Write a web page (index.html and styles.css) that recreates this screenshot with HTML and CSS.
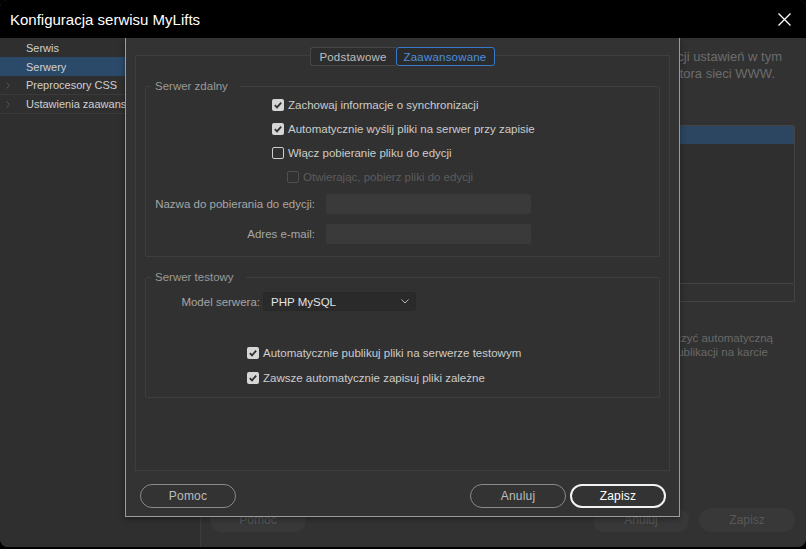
FILE: index.html
```html
<!DOCTYPE html>
<html lang="pl">
<head>
<meta charset="utf-8">
<title>Konfiguracja serwisu MyLifts</title>
<link rel="stylesheet" href="styles.css">
</head>
<body>
<div class="window">
  <header class="titlebar">
    <span class="title">Konfiguracja serwisu MyLifts</span>
    <svg class="close" width="13" height="13" viewBox="0 0 13 13"><path d="M0.5 0.5 L12.5 12.5 M12.5 0.5 L0.5 12.5" stroke="#fff" stroke-width="1.3" fill="none"/></svg>
  </header>
  <div class="content">
    <nav class="sidebar">
      <div class="nav-item"><span class="chev"></span>Serwis</div>
      <div class="nav-item selected"><span class="chev"></span>Serwery</div>
      <div class="nav-item sep"><span class="chev"><svg width="4" height="7" viewBox="0 0 4 7"><path d="M0.5 0.5 L3.5 3.5 L0.5 6.5" stroke="#555" fill="none"/></svg></span>Preprocesory CSS</div>
      <div class="nav-item sep"><span class="chev"><svg width="4" height="7" viewBox="0 0 4 7"><path d="M0.5 0.5 L3.5 3.5 L0.5 6.5" stroke="#555" fill="none"/></svg></span>Ustawienia zaawansowane</div>
    </nav>
    <main class="main">
      <div class="intro">
        <div>konfiguracji ustawień w tym</div>
        <div class="intro-second">administratora sieci WWW.</div>
      </div>
      <div class="site-table">
        <div class="site-table-head"></div>
      </div>
      <div class="table-tools"></div>
      <div class="note">
        <div>Aby wyłączyć automatyczną</div>
        <div class="note-second">w sekcji publikacji na karcie</div>
      </div>
      <div class="bg-buttons">
        <span class="bg-btn">Pomoc</span>
        <span class="bg-right">
          <span class="bg-btn">Anuluj</span>
          <span class="bg-btn">Zapisz</span>
        </span>
      </div>
    </main>
  </div>

  <div class="dialog">
    <div class="tabs">
      <span class="tab">Podstawowe</span>
      <span class="tab active">Zaawansowane</span>
    </div>
    <div class="panel">
      <fieldset class="group group-remote">
        <legend>Serwer zdalny</legend>
        <div class="checks checks-main">
          <label class="check-row"><span class="box checked"><svg width="12" height="12" viewBox="0 0 12 12"><path d="M2.8 6.2 L5 8.4 L9.2 3.6" stroke="#2e2e2e" stroke-width="1.7" fill="none"/></svg></span>Zachowaj informacje o synchronizacji</label>
          <label class="check-row"><span class="box checked"><svg width="12" height="12" viewBox="0 0 12 12"><path d="M2.8 6.2 L5 8.4 L9.2 3.6" stroke="#2e2e2e" stroke-width="1.7" fill="none"/></svg></span>Automatycznie wyślij pliki na serwer przy zapisie</label>
          <label class="check-row"><span class="box"></span>Włącz pobieranie pliku do edycji</label>
          <label class="check-row sub disabled"><span class="box"></span>Otwierając, pobierz pliki do edycji</label>
        </div>
        <div class="form-grid">
          <span class="field-label">Nazwa do pobierania do edycji:</span>
          <span class="input"></span>
          <span class="field-label">Adres e-mail:</span>
          <span class="input"></span>
        </div>
      </fieldset>
      <fieldset class="group group-test">
        <legend>Serwer testowy</legend>
        <div class="model-row">
          <span class="field-label">Model serwera:</span>
          <span class="select">PHP MySQL<svg width="8" height="5" viewBox="0 0 8 5"><path d="M0.5 0.5 L4 4 L7.5 0.5" stroke="#b8b8b8" stroke-width="1" fill="none"/></svg></span>
        </div>
        <div class="checks checks-test">
          <label class="check-row"><span class="box checked"><svg width="12" height="12" viewBox="0 0 12 12"><path d="M2.8 6.2 L5 8.4 L9.2 3.6" stroke="#2e2e2e" stroke-width="1.7" fill="none"/></svg></span>Automatycznie publikuj pliki na serwerze testowym</label>
          <label class="check-row"><span class="box checked"><svg width="12" height="12" viewBox="0 0 12 12"><path d="M2.8 6.2 L5 8.4 L9.2 3.6" stroke="#2e2e2e" stroke-width="1.7" fill="none"/></svg></span>Zawsze automatycznie zapisuj pliki zależne</label>
        </div>
      </fieldset>
    </div>
    <div class="dialog-buttons">
      <span class="btn">Pomoc</span>
      <span class="btn-group">
        <span class="btn">Anuluj</span>
        <span class="btn primary">Zapisz</span>
      </span>
    </div>
  </div>
</div>
</body>
</html>
```

FILE: styles.css
```css
* { box-sizing: border-box; }

body {
  margin: 0;
  background: #000;
  font-family: "Liberation Sans", Arial, sans-serif;
}

.window {
  position: relative;
  width: 806px;
  height: 547px;
  background: #323232;
  border-radius: 8px;
  overflow: hidden;
  display: flex;
  flex-direction: column;
}

.titlebar {
  height: 38px;
  flex-shrink: 0;
  background: #000;
  display: flex;
  align-items: center;
  justify-content: space-between;
  padding: 0 15px 0 10px;
}

.title {
  color: #fff;
  font-size: 15px;
}

.close { display: block; }

.content {
  flex: 1;
  display: flex;
  min-height: 0;
}

.sidebar {
  width: 201px;
  flex-shrink: 0;
  background: #2f2f2f;
  border-right: 1px solid #3c3c3c;
}

.nav-item {
  height: 19px;
  display: flex;
  align-items: center;
  padding-left: 6px;
  font-size: 11px;
  color: #d0d0d0;
  white-space: nowrap;
  overflow: hidden;
}

.nav-item.selected { background: #2b4a6a; }

.nav-item.sep { border-bottom: 1px solid #3a3a3a; }

.chev {
  width: 20px;
  display: flex;
  align-items: center;
}

.main {
  flex: 1;
  display: flex;
  flex-direction: column;
  padding: 10px 11px 15px 14px;
  min-width: 0;
}

.intro {
  font-size: 13px;
  line-height: 17px;
  color: #6c6c6c;
  text-align: right;
  white-space: nowrap;
  padding-right: 13px;
}

.intro-second { padding-right: 7px; }

.site-table {
  margin-top: 43px;
  height: 159px;
  border: 1px solid #444;
  border-radius: 2px;
  background: #2f2f2f;
}

.site-table-head {
  height: 18px;
  background: #2c4560;
}

.table-tools {
  height: 18px;
  border: 1px solid #444;
  border-top: none;
  border-radius: 0 0 2px 2px;
  background: #313131;
}

.note {
  margin-top: 29px;
  font-size: 11.5px;
  line-height: 14px;
  color: #686868;
  text-align: right;
  white-space: nowrap;
  padding-right: 22px;
}

.note-second { padding-right: 5px; }

.bg-buttons {
  margin-top: auto;
  display: flex;
  justify-content: space-between;
  padding-left: 9px;
  margin-left: -14px;
}

.bg-right {
  display: flex;
  gap: 10px;
}

.bg-btn {
  width: 96px;
  height: 24px;
  border-radius: 12px;
  background: #383838;
  color: #575757;
  font-size: 12px;
  display: flex;
  align-items: center;
  justify-content: center;
}

/* Modal dialog over the window */
.dialog {
  position: absolute;
  left: 125px;
  top: 38px;
  width: 555px;
  height: 479px;
  background: #333;
  border: 1px solid #9c9c9c;
  border-top: none;
  box-shadow: 0 2px 6px rgba(0, 0, 0, 0.35);
  display: flex;
  flex-direction: column;
  padding: 9px 9px 8px;
  font-size: 11.5px;
}

.tabs {
  height: 19px;
  display: flex;
  justify-content: center;
  position: relative;
  z-index: 1;
  padding-right: 1px;
}

.tab {
  height: 19px;
  width: 86px;
  display: flex;
  align-items: center;
  justify-content: center;
  background: #2d2d2d;
  border: 1px solid #474747;
  border-right: none;
  border-radius: 3px 0 0 3px;
  color: #bdbdbd;
  letter-spacing: 0.2px;
}

.tab.active {
  width: 99px;
  border: 1px solid #3a78cc;
  border-radius: 3px;
  color: #4d8fdc;
  background: #2b2b2b;
}

.panel {
  margin-top: -11px;
  height: 416px;
  border: 1px solid #3e3e3e;
  background: #313131;
  padding: 0 9px;
}

.group {
  margin: 0;
  padding: 0;
  border: 1px solid #3e3e3e;
  border-radius: 2px;
  min-width: 0;
}

.group legend {
  margin-left: 5px;
  padding: 0 12px 0 4px;
  line-height: 14px;
  color: #9a9a9a;
}

.group-remote {
  margin-top: 23px;
  padding-bottom: 12px;
}

.group-test {
  margin-top: 13px;
  padding-bottom: 7px;
}

.checks {
  display: flex;
  flex-direction: column;
}

.checks-main { padding-left: 126px; }

.checks-test {
  padding-left: 101px;
  margin-top: 30px;
  gap: 1px;
}

.check-row {
  height: 24px;
  display: flex;
  align-items: center;
  gap: 4px;
  color: #cccccc;
  white-space: nowrap;
}

.check-row.sub { padding-left: 15px; }

.check-row.disabled { color: #5c5c5c; }

.box {
  width: 12px;
  height: 12px;
  flex-shrink: 0;
  border: 1px solid #cdcdcd;
  border-radius: 2px;
  display: flex;
}

.box.checked {
  border: none;
  background: #d6d6d6;
}

.check-row.disabled .box { border-color: #4f4f4f; }

.form-grid {
  margin-top: 5px;
  display: grid;
  grid-template-columns: 169px 205px;
  grid-auto-rows: 20px;
  column-gap: 11px;
  row-gap: 10px;
}

.field-label {
  display: flex;
  align-items: center;
  justify-content: flex-end;
  color: #a6a6a6;
  white-space: nowrap;
}

.input {
  background: #3a3a3a;
  border-radius: 2px;
}

.model-row {
  margin-top: 8px;
  display: grid;
  grid-template-columns: 114px 153px;
  grid-auto-rows: 19px;
  column-gap: 3px;
}

.select {
  display: flex;
  align-items: center;
  justify-content: space-between;
  padding: 0 6px 0 7px;
  background: #2a2a2a;
  border: 1px solid #282828;
  border-radius: 3px;
  color: #e4e4e4;
}

.dialog-buttons {
  margin-top: 13px;
  display: flex;
  justify-content: space-between;
  padding: 0 4px 0 5px;
}

.btn-group {
  display: flex;
  gap: 4px;
}

.btn {
  width: 96px;
  height: 24px;
  border: 1px solid #8a8a8a;
  border-radius: 12px;
  display: flex;
  align-items: center;
  justify-content: center;
  color: #bdbdbd;
  font-size: 12px;
  letter-spacing: 0.2px;
}

.btn.primary {
  border: 2px solid #f2f2f2;
  color: #fff;
}
```
